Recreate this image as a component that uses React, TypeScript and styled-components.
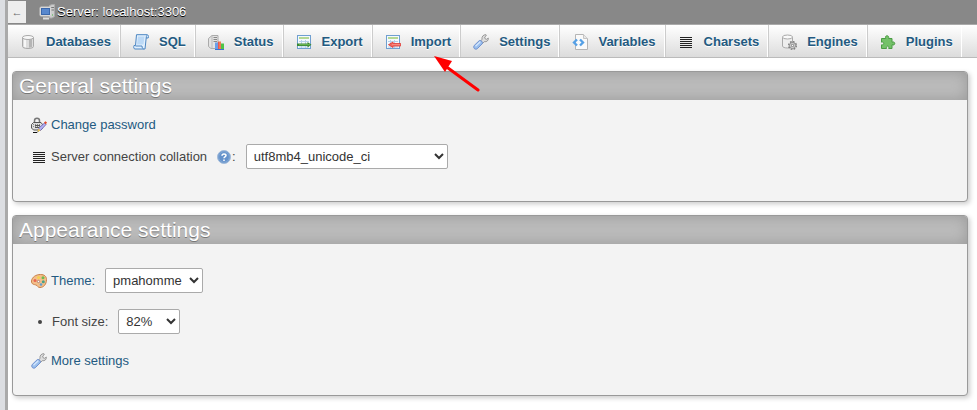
import React from "react";
import styled, { createGlobalStyle } from "styled-components";

const GlobalStyle = createGlobalStyle`
  * { box-sizing: border-box; }
  html { background: #fff; }
  body {
    margin: 0;
    color: #444;
    font: 13px/16px "Liberation Sans", Arial, sans-serif;
  }
`;

const Shell = styled.div`
  display: flex;
  min-height: 100vh;
`;

const NavigationEdge = styled.aside`
  flex: none;
  width: 8px;
  background: #dcdee2;
  border-right: 3px solid #aaa;
`;

const Main = styled.main`
  flex: 1;
  min-width: 0;
  position: relative;
`;

const ServerBar = styled.header`
  display: flex;
  align-items: center;
  height: 24px;
  background: #888;
`;

const CollapseButton = styled.button`
  width: 18px;
  height: 22px;
  padding: 0;
  border: 0;
  background: #eee;
  color: #666;
  font: 11px "Liberation Sans", Arial, sans-serif;
`;

const ServerLink = styled.a`
  display: flex;
  align-items: center;
  gap: 2px;
  margin-left: 13px;
  color: #fff;
  text-decoration: none;
  text-shadow: 0 1px 0 #000;
`;

const TabBar = styled.nav`
  display: flex;
  height: 34px;
  background: linear-gradient(#fff, #dcdcdc);
  border-top: 1px solid #aaa;
  border-bottom: 1px solid #bbb;
  overflow: hidden;
`;

const Tab = styled.a`
  display: flex;
  align-items: center;
  flex: none;
  gap: 10px;
  padding: 1px 8px 0 12px;
  border-right: 1px solid #fff;
  color: #235a81;
  font-weight: bold;
  text-decoration: none;
  text-shadow: 0 1px 0 #fff;

  & + & {
    border-left: 1px solid #ccc;
  }
`;

const Panels = styled.div`
  display: flex;
  flex-direction: column;
  gap: 13px;
  padding: 13px 9px 14px 4px;
`;

const Panel = styled.section`
  background: #f3f3f3;
  border: 1px solid #999;
  border-radius: 4px;
  box-shadow: 2px 2px 5px #ccc;
`;

const PanelTitle = styled.h2`
  margin: 0;
  padding: 2px 6px;
  background: #bbb;
  border-radius: 3px 3px 0 0;
  box-shadow: inset 0 0 14px #999;
  color: #fff;
  font-size: 21px;
  font-weight: normal;
  line-height: 24px;
  text-shadow: 0 1px 0 #777;
`;

const SettingList = styled.ul<{ $roomy?: boolean }>`
  display: flex;
  flex-direction: column;
  gap: ${(p) => (p.$roomy ? 16 : 9)}px;
  margin: 0;
  padding: ${(p) => (p.$roomy ? "24px 18px" : "14px 18px 32px")};
  list-style: none;
`;

const Setting = styled.li`
  display: flex;
  align-items: center;
  gap: 4px;
  min-height: 21px;
`;

const SettingLink = styled.a`
  display: flex;
  align-items: center;
  gap: 4px;
  color: #235a81;
  text-decoration: none;
`;

const Help = styled.a`
  display: flex;
  margin-left: 5px;
`;

const Colon = styled.span`
  margin-left: -4px;
`;

const Bullet = styled.span`
  width: 4px;
  height: 4px;
  margin: 0 6px 0 7px;
  border-radius: 50%;
  background: #444;
`;

const Select = styled.select<{ $width: number }>`
  width: ${(p) => p.$width}px;
  height: 25px;
  margin-left: 6px;
  padding: 3px;
  border: 1px solid #aaa;
  border-radius: 2px;
  background: #fff;
  color: #333;
  font: inherit;
`;

const Svg = styled.svg`
  display: block;
  flex: none;
  width: 16px;
  height: 16px;
`;

const Pointer = styled.svg`
  position: absolute;
  left: 426px;
  top: 56px;
  width: 46px;
  height: 36px;
  pointer-events: none;
`;

type IconName =
  | "server" | "database" | "sql" | "status" | "export" | "import" | "wrench"
  | "variables" | "lines" | "engine" | "plugin" | "password" | "help" | "theme";

const sheet = (
  <>
    <rect x="1.5" y="1.5" width="13" height="13" fill="#f4f9fd" stroke="#6f9fd0" />
    <path d="M3 4h10" stroke="#9fcd70" strokeWidth="1.5" />
    <path d="M3 7.5h10M3 10.5h10M3 13h10M5.5 6v8M9.5 6v8" stroke="#b5d0ea" />
  </>
);

const art: Record<IconName, React.ReactNode> = {
  server: (
    <>
      <path d="M10.5 1.5 13 .5h2.5v12L13 14h-2.5z" fill="#ccc" stroke="#aaa" />
      <path d="M12 3.5h3M12 6h3" stroke="#777" />
      <path d="M13 11h1" stroke="#4b4" />
      <rect x="1" y="3" width="11" height="9" rx="1" fill="#e5e5e5" stroke="#ccc" />
      <rect x="2.5" y="4.5" width="8" height="6" fill="#5888ce" stroke="#3c68ab" />
      <path d="M4 14.5h6" stroke="#ddd" strokeWidth="2" />
    </>
  ),
  database: (
    <>
      <path d="M2.5 3.5v9c0 1.2 2.3 2 5.5 2s5.5-.8 5.5-2v-9z" fill="#ddd" stroke="#aaa" />
      <path d="M9 5h3v8l-3 .7z" fill="#b5b5b5" />
      <path d="M4 5.5v7.3l2 .6V6z" fill="#f7f7f7" />
      <ellipse cx="8" cy="3.5" rx="5.5" ry="2" fill="#f7f7f7" stroke="#aaa" />
    </>
  ),
  sql: (
    <>
      <path d="M3.500.700h10.500c1.200 0 1.800 1.200 1.200 3.300h-2l-1.200 11H2C.6 15 .5 13 1 11.500h1.500z" fill="#e3f0fd" stroke="#4c86c2" />
      <path d="M13.200 4c0-1 .2-2 .8-2.800M2.500 12h6.500c0 1.500.5 2.500 1.500 3" fill="none" stroke="#4c86c2" />
      <path d="M5 2.500 4 10.500h6.500l1-8z" fill="#bcd9f6" />
    </>
  ),
  status: (
    <>
      <path d="M.5 4.5 4 1.500h6v12l-2 1H3l-2.500-2z" fill="#e3e3e3" stroke="#aaa" />
      <path d="M4 1.500v13" stroke="#bbb" />
      <path d="M5.500 3.500h3.500M5.500 5.500h3.500M5.500 7.500h3.500" stroke="#888" />
      <rect x="7" y="8.500" width="3" height="6.500" fill="#6a9fe8" />
      <rect x="10" y="7.500" width="3" height="7.500" fill="#f07a55" />
      <rect x="13" y="9.500" width="3" height="5.500" fill="#4fc448" />
      <path d="M7 15.500h9" stroke="#3a70cf" />
      <path d="M10.500 8v7" stroke="#ee5650" />
    </>
  ),
  export: (
    <>
      {sheet}
      <path d="M1 9.500h10.500V8l4 2.800-4 2.700V12H1z" fill="#398832" />
      <path d="M3 10.700h11" stroke="#76bd5a" />
    </>
  ),
  import: (
    <>
      {sheet}
      <path d="M15.700 9.500H8V8l-4.500 2.700L8 13.500V12h7.700z" fill="#f2675d" stroke="#e03a35" strokeWidth=".8" />
      <path d="M7 10.700h8" stroke="#ffb2a8" strokeWidth=".6" />
    </>
  ),
  wrench: (
    <>
      <path d="M7.500 7 9 5.300C8.500 2.500 10.500.5 13 .7l.3 1L11.700 3l.3 1.700 1.700.6L15.300 4C15.700 6.500 13.700 8.200 11.300 7.700L9.500 9.500z" fill="#ddd" stroke="#888" strokeWidth=".8" />
      <path d="M1.200 11.500 6.300 6.600c1.700-.7 3.700 1.200 3 3.100l-5 5c-2.200 1.600-4.700-1-3.100-3.200z" fill="#9abfed" stroke="#5e82c8" strokeWidth=".8" />
      <path d="m2.500 12.200 4.800-4.500" stroke="#d5e7fd" strokeWidth="1.200" />
    </>
  ),
  variables: (
    <>
      <path d="M3.500.5h8l4 4v11h-12z" fill="#fafafa" stroke="#b5b5b5" />
      <path d="M11.500.5v4h4" fill="#e8e8e8" stroke="#c5c5c5" />
      <path d="M5 5.500 2 8.500l3 3M8 5.500l3 3-3 3" fill="none" stroke="#55a0e6" strokeWidth="2.300" />
    </>
  ),
  lines: (
    <path d="M2 3.500h12M2 5.500h12M2 7.500h12M2 9.500h12M2 11.500h12M2 13.500h12" stroke="#222" />
  ),
  engine: (
    <>
      <path d="M1.500 3v9c0 1.200 2 2 5 2s5-.8 5-2V3z" fill="#eee" stroke="#aaa" />
      <ellipse cx="6.500" cy="3" rx="5" ry="2" fill="#fafafa" stroke="#aaa" />
      <circle cx="11.500" cy="11.500" r="3.800" stroke="#777" strokeWidth="1.400" strokeDasharray="1.700 1.280" />
      <circle cx="11.500" cy="11.500" r="3" fill="#ddd" stroke="#888" />
      <circle cx="11.500" cy="11.500" r="1.200" fill="#fff" stroke="#777" />
    </>
  ),
  plugin: (
    <path d="M1.500 4.500h4.300c-1.800-3.700 4.200-3.700 2.700 0h3.500v3.700c3.700-1.500 3.700 4 0 2.600v3.700H8.700c1-3.200-3-3.200-2.200 0h-5v-3.700c3 .8 3-3.600 0-2.600z" fill="#74c169" stroke="#4b9c44" />
  ),
  password: (
    <>
      <path d="M3.500 6V3.800c0-3.400 5-3.400 5 0V6" fill="none" stroke="#777" strokeWidth="1.500" />
      <path d="M2.500 5.500h7.500l1.500 2v3.500l-2 2h-7l-2-2v-3.500z" fill="#ddd" stroke="#555" />
      <path d="M2 7.500h8M2 9.500h7" stroke="#888" strokeDasharray="1 1" />
      <path d="M4 8.500h5M4 10.500h4" stroke="#555" />
      <path d="m7 13 1.500-2.500 5-4.500L15 7.500 9.500 13.500z" fill="#b5b2f2" stroke="#5f58ad" strokeWidth=".8" />
      <path d="m13 5.500 1.500-1.200L16 5.500l-1.300 2z" fill="#e64b25" />
      <path d="m7.500 11.500 2 2-3 1.500z" fill="#f6c839" />
      <path d="M2 15.500h4l1-1" fill="none" stroke="#111" />
    </>
  ),
  help: (
    <>
      <circle cx="8" cy="8" r="6.500" fill="#6592cb" stroke="#a3bcdb" />
      <circle cx="8" cy="8" r="5.300" fill="none" stroke="#86abd6" strokeWidth=".8" />
      <path d="M6 6.700c0-2.500 4-2.300 4-.2 0 1.500-2 1.300-2 2.700M8 10.500V12" fill="none" stroke="#fff" strokeWidth="1.500" />
    </>
  ),
  theme: (
    <>
      <path d="M.5 8C1 4 5 1.500 9.500 1.500c4 0 6 2 6 5 0 5-3 8-6.500 8-2.500 0-2.300-2-4-2.500-1.600-.6-4.700-.4-4.500-4z" fill="#f3bf8a" stroke="#c98048" />
      <circle cx="4" cy="7.500" r="1.500" fill="#e96550" />
      <circle cx="7.500" cy="4.500" r="1.500" fill="#f5d24d" />
      <circle cx="12" cy="4.800" r="1.500" fill="#6cbb50" />
      <circle cx="12.300" cy="8.800" r="1.500" fill="#47a38a" />
      <circle cx="10" cy="11.500" r="1.300" fill="#5e9ed3" />
      <circle cx="7.500" cy="8.500" r="1.200" fill="#fff" stroke="#b67f68" />
    </>
  ),
};

const Icon = ({ name }: { name: IconName }) => (
  <Svg viewBox="0 0 16 16" fill="none" aria-hidden="true">
    {art[name]}
  </Svg>
);

const tabs: { label: string; icon: IconName }[] = [
  { label: "Databases", icon: "database" },
  { label: "SQL", icon: "sql" },
  { label: "Status", icon: "status" },
  { label: "Export", icon: "export" },
  { label: "Import", icon: "import" },
  { label: "Settings", icon: "wrench" },
  { label: "Variables", icon: "variables" },
  { label: "Charsets", icon: "lines" },
  { label: "Engines", icon: "engine" },
  { label: "Plugins", icon: "plugin" },
];

export default function App() {
  return (
    <>
      <GlobalStyle />
      <Shell>
        <NavigationEdge />
        <Main>
          <ServerBar>
            <CollapseButton type="button" aria-label="Hide panel">←</CollapseButton>
            <ServerLink href="#server">
              <Icon name="server" />
              Server: localhost:3306
            </ServerLink>
          </ServerBar>
          <TabBar>
            {tabs.map((tab) => (
              <Tab key={tab.label} href={`#${tab.label.toLowerCase()}`}>
                <Icon name={tab.icon} />
                {tab.label}
              </Tab>
            ))}
          </TabBar>
          <Panels>
            <Panel>
              <PanelTitle>General settings</PanelTitle>
              <SettingList>
                <Setting>
                  <SettingLink href="#password">
                    <Icon name="password" />
                    Change password
                  </SettingLink>
                </Setting>
                <Setting>
                  <Icon name="lines" />
                  <label htmlFor="collation">Server connection collation</label>
                  <Help href="#help" aria-label="Documentation">
                    <Icon name="help" />
                  </Help>
                  <Colon>:</Colon>
                  <Select id="collation" $width={202}>
                    <option>utf8mb4_unicode_ci</option>
                  </Select>
                </Setting>
              </SettingList>
            </Panel>
            <Panel>
              <PanelTitle>Appearance settings</PanelTitle>
              <SettingList $roomy>
                <Setting>
                  <SettingLink href="#themes">
                    <Icon name="theme" />
                    Theme:
                  </SettingLink>
                  <Select aria-label="Theme" $width={98}>
                    <option>pmahomme</option>
                  </Select>
                </Setting>
                <Setting>
                  <Bullet />
                  <label htmlFor="font-size">Font size:</label>
                  <Select id="font-size" $width={62}>
                    <option>82%</option>
                  </Select>
                </Setting>
                <Setting>
                  <SettingLink href="#more">
                    <Icon name="wrench" />
                    More settings
                  </SettingLink>
                </Setting>
              </SettingList>
            </Panel>
          </Panels>
          <Pointer viewBox="0 0 46 36" aria-hidden="true">
            <path d="m14 12 30 22" stroke="#f00" strokeWidth="3" strokeLinecap="round" />
            <path d="m0 0 18 5-7 11z" fill="#f00" />
          </Pointer>
        </Main>
      </Shell>
    </>
  );
}
